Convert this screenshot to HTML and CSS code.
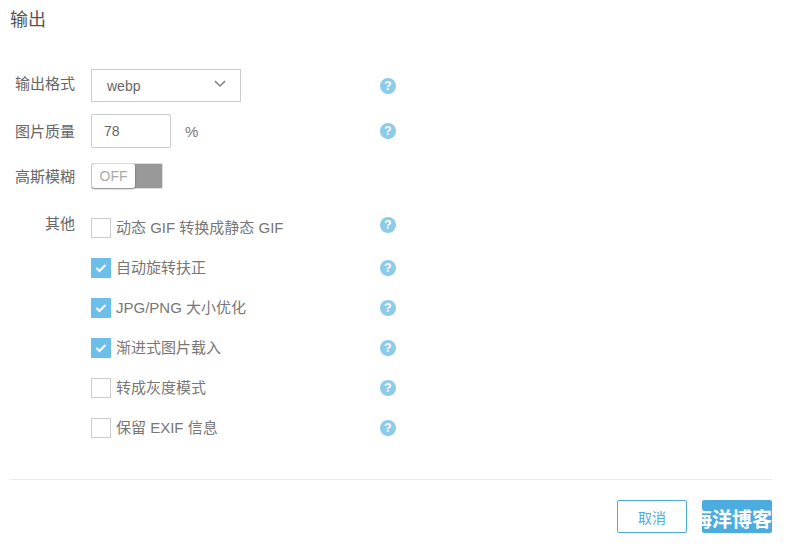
FILE: index.html

```html
<!DOCTYPE html>
<html lang="zh-CN">
<head>
  <meta charset="UTF-8" />
  <title>输出</title>
  <link rel="stylesheet" href="styles.css">
</head>
<body>
  <div class="panel">
    <h2 class="panel-title">输出</h2>

    <div class="form">
      <div class="row row-format">
        <label class="row-label">输出格式</label>
        <div class="row-body">
          <div class="select">
            <span>webp</span>
            <svg class="chevron" width="12" height="8" viewBox="0 0 12 8"><path d="M1 1.2l5 4.8 5-4.8" fill="none" stroke="#888" stroke-width="1.6"/></svg>
          </div>
        </div>
        <span class="help">?</span>
      </div>

      <div class="row row-quality">
        <label class="row-label">图片质量</label>
        <div class="row-body">
          <div class="input">78</div>
          <span class="unit">%</span>
        </div>
        <span class="help">?</span>
      </div>

      <div class="row row-blur">
        <label class="row-label">高斯模糊</label>
        <div class="row-body">
          <div class="switch"><span class="switch-knob">OFF</span></div>
        </div>
      </div>

      <div class="others">
        <label class="row-label others-label">其他</label>
        <div class="others-list">
          <div class="check-row first">
            <span class="check"></span>
            <span class="check-text">动态 GIF 转换成静态 GIF</span>
            <span class="help">?</span>
          </div>
          <div class="check-row">
            <span class="check on"><svg width="12" height="10" viewBox="0 0 12 10"><path d="M1.5 5l3 3 6-6" fill="none" stroke="#fff" stroke-width="2"/></svg></span>
            <span class="check-text">自动旋转扶正</span>
            <span class="help">?</span>
          </div>
          <div class="check-row">
            <span class="check on"><svg width="12" height="10" viewBox="0 0 12 10"><path d="M1.5 5l3 3 6-6" fill="none" stroke="#fff" stroke-width="2"/></svg></span>
            <span class="check-text">JPG/PNG 大小优化</span>
            <span class="help">?</span>
          </div>
          <div class="check-row">
            <span class="check on"><svg width="12" height="10" viewBox="0 0 12 10"><path d="M1.5 5l3 3 6-6" fill="none" stroke="#fff" stroke-width="2"/></svg></span>
            <span class="check-text">渐进式图片载入</span>
            <span class="help">?</span>
          </div>
          <div class="check-row">
            <span class="check"></span>
            <span class="check-text">转成灰度模式</span>
            <span class="help">?</span>
          </div>
          <div class="check-row">
            <span class="check"></span>
            <span class="check-text">保留 EXIF 信息</span>
            <span class="help">?</span>
          </div>
        </div>
      </div>
    </div>

    <div class="footer">
      <button class="btn btn-cancel">取消</button>
      <button class="btn btn-ok"></button>
      <span class="watermark">海洋博客</span>
    </div>
  </div>
</body>
</html>
```

FILE: styles.css

```css
* {
  box-sizing: border-box;
}

body {
  margin: 0;
  background: #fff;
  font-family: "Liberation Sans", "Noto Sans CJK SC", sans-serif;
  font-size: 15px;
  color: #777;
  overflow: hidden;
}

.panel {
  width: 762px;
  margin-left: 10px;
  padding-top: 9px;
}

.panel-title {
  margin: 0;
  font-size: 18px;
  line-height: 22px;
  font-weight: 400;
  color: #555;
}

.form {
  margin-top: 38px;
  height: 411px;
  border-bottom: 1px solid #eaeaea;
}

.row {
  display: flex;
  align-items: center;
  width: 386px;
}

.row-format {
  height: 33px;
}

.row-quality {
  height: 34px;
  margin-top: 12px;
}

.row-blur {
  height: 26px;
  margin-top: 15px;
}

.row-label {
  flex: none;
  width: 65px;
  text-align: right;
  line-height: 20px;
  color: #666;
}

.row-format .row-label {
  padding-bottom: 4px;
}

.row-quality .row-label,
.row-blur .row-label {
  padding-top: 2px;
}

.row-body {
  flex: 1;
  display: flex;
  align-items: center;
  margin-left: 16px;
}

.select {
  display: flex;
  align-items: center;
  justify-content: space-between;
  width: 150px;
  height: 33px;
  padding: 0 14px 0 15px;
  border: 1px solid #ccc;
  font-size: 14px;
  color: #666;
}

.chevron {
  margin-bottom: 4px;
}

.input {
  width: 80px;
  height: 34px;
  padding-left: 12px;
  border: 1px solid #ccc;
  border-radius: 2px;
  font-size: 14px;
  line-height: 32px;
  color: #666;
}

.unit {
  margin-left: 14px;
  color: #777;
}

.switch {
  position: relative;
  width: 72px;
  height: 26px;
  background: #999;
  border: 1px solid #ddd;
  border-radius: 2px;
}

.switch-knob {
  display: block;
  width: 43px;
  height: 24px;
  background: #fff;
  border-radius: 2px;
  box-shadow: 0 1px 2px rgba(0, 0, 0, 0.4);
  font-size: 14px;
  text-align: center;
  line-height: 24px;
  color: #aaa;
}

.help {
  flex: none;
  width: 16px;
  height: 16px;
  border-radius: 50%;
  background: #8ccbea;
  color: #fff;
  font-family: "Liberation Sans", sans-serif;
  font-size: 12px;
  font-weight: 700;
  line-height: 16px;
  text-align: center;
}

.others {
  display: flex;
  margin-top: 29px;
  width: 386px;
}

.others-label {
  line-height: 12px;
}

.others-list {
  flex: 1;
  margin-left: 16px;
}

.check-row {
  display: flex;
  align-items: center;
  height: 20px;
  margin-bottom: 20px;
}

.check-row.first .help {
  margin-bottom: 6px;
}

.check {
  flex: none;
  display: flex;
  align-items: center;
  justify-content: center;
  width: 20px;
  height: 20px;
  border: 1px solid #ccc;
  background: #fff;
}

.check.on {
  background: #6cbfea;
  border-color: #6cbfea;
}

.check-text {
  flex: 1;
  margin-left: 5px;
  line-height: 18px;
  color: #777;
}

.footer {
  position: relative;
  display: flex;
  justify-content: flex-end;
  gap: 15px;
  padding-top: 20px;
}

.btn {
  width: 70px;
  height: 33px;
  padding: 0;
  border-radius: 2px;
  border: 1px solid #4dacdf;
  font-family: inherit;
  font-size: 14px;
}

.btn-cancel {
  background: #fff;
  color: #4dacdf;
}

.btn-ok {
  background: #4dacdf;
}

.watermark {
  position: absolute;
  right: 0;
  top: 29px;
  font-size: 20px;
  line-height: 22px;
  font-weight: 700;
  color: #fff;
  white-space: nowrap;
}
```
